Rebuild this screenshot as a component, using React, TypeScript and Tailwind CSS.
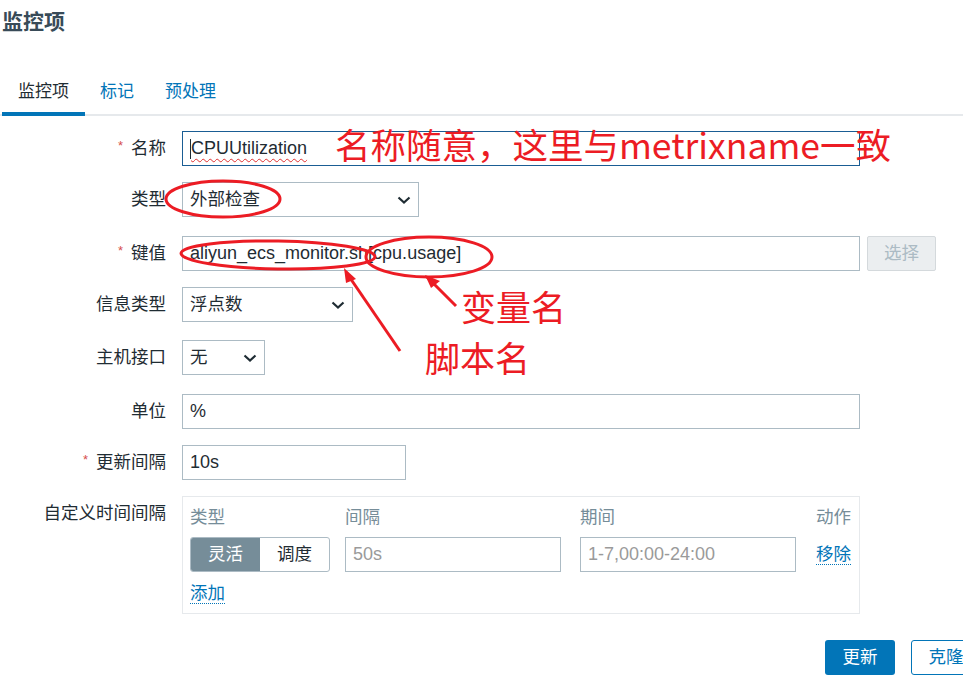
import React from "react";

const F = { fontFamily: '"Liberation Sans", "Noto Sans CJK SC", sans-serif' };

function Chevron() {
  return (
    <svg width="14" height="8" viewBox="0 0 14 8" className="shrink-0">
      <path d="M1.5 1.5 L7 6.5 L12.5 1.5" fill="none" stroke="#1f2c33" strokeWidth="2.2" />
    </svg>
  );
}

function Label({ text, req }: { text: string; req?: boolean }) {
  return (
    <div className="w-[166px] shrink-0 flex items-center justify-end h-[35px] text-[17.5px] text-[#1f2c33]">
      {req && <span className="text-[#d64e4e] text-[13px] mr-[8px] -mt-[6px]">*</span>}
      <span>{text}</span>
    </div>
  );
}

function Row({ mt, label, req, children, top }: { mt: string; label: string; req?: boolean; children: React.ReactNode; top?: boolean }) {
  return (
    <div className={`flex ${top ? "items-start" : "items-center"} ${mt}`}>
      <Label text={label} req={req} />
      <div className="ml-[16px]">{children}</div>
    </div>
  );
}

function Select({ w, text }: { w: string; text: string }) {
  return (
    <div className={`${w} h-[35px] border border-[#acbbc4] flex items-center justify-between pl-[7px] pr-[7px] text-[17.5px] text-[#1f2c33]`}>
      <span>{text}</span>
      <Chevron />
    </div>
  );
}

function Input({ w, text, cls }: { w: string; text: string; cls?: string }) {
  return (
    <div className={`${w} h-[35px] border border-[#acbbc4] flex items-center pl-[7px] text-[18px] ${cls ?? "text-[#1f2c33]"}`}>
      <span>{text}</span>
    </div>
  );
}

export default function App() {
  const red = "#ec1c24";
  return (
    <div className="relative w-[963px] h-[686px] overflow-hidden bg-white" style={F}>
      <div className="pt-[9px] pl-[2px] text-[21px] font-bold leading-[26px] text-[#384b58]">监控项</div>

      <div className="mt-[39px] flex border-b-2 border-[#e6e9ec] text-[17px] leading-[20px]">
        <div className="ml-[2px] px-[16px] pt-[8px] pb-[10px] border-b-4 border-[#0275b8] -mb-[2px] text-[#1f2c33]">监控项</div>
        <div className="px-[15px] pt-[8px] pb-[12px] text-[#0275b8]">标记</div>
        <div className="px-[16px] pt-[8px] pb-[12px] text-[#0275b8]">预处理</div>
      </div>

      <Row mt="mt-[15px]" label="名称" req>
        <div className="w-[678px] h-[35px] border border-[#1a5d94] flex items-center pl-[7px] text-[18px] text-[#1f2c33]">
          <span className="w-px h-[20px] bg-[#1f2c33]" />
          <span className="underline decoration-wavy decoration-[#e03030] decoration-1 underline-offset-[4px]">CPUUtilization</span>
        </div>
      </Row>

      <Row mt="mt-[16px]" label="类型">
        <Select w="w-[237px]" text="外部检查" />
      </Row>

      <Row mt="mt-[19px]" label="键值" req>
        <div className="flex items-center">
          <Input w="w-[678px]" text="aliyun_ecs_monitor.sh[cpu.usage]" />
          <div className="ml-[7px] w-[69px] h-[35px] rounded-[2px] border border-[#d4d9dc] bg-[#ebeef0] flex items-center justify-center text-[17.5px] text-[#acbbc4]">选择</div>
        </div>
      </Row>

      <Row mt="mt-[16px]" label="信息类型">
        <Select w="w-[171px]" text="浮点数" />
      </Row>

      <Row mt="mt-[18px]" label="主机接口">
        <Select w="w-[83px]" text="无" />
      </Row>

      <Row mt="mt-[19px]" label="单位">
        <Input w="w-[678px]" text="%" />
      </Row>

      <Row mt="mt-[16px]" label="更新间隔" req>
        <Input w="w-[224px]" text="10s" />
      </Row>

      <Row mt="mt-[16px]" label="自定义时间间隔" top>
        <div className="w-[678px] border border-[#e6e9ec] pl-[7px] pt-[8px] pb-[9px] text-[17.5px]">
          <div className="flex leading-[24px] text-[#768d99]">
            <div className="w-[155px]">类型</div>
            <div className="w-[235px]">间隔</div>
            <div className="w-[236px]">期间</div>
            <div>动作</div>
          </div>
          <div className="flex items-center mt-[8px]">
            <div className="flex w-[140px] h-[35px] border border-[#acbbc4] rounded-[3px] overflow-hidden">
              <div className="w-[70px] bg-[#768d99] text-white flex items-center justify-center">灵活</div>
              <div className="w-[70px] text-[#1f2c33] flex items-center justify-center">调度</div>
            </div>
            <div className="ml-[15px]">
              <Input w="w-[216px]" text="50s" cls="text-[#9a9a9a]" />
            </div>
            <div className="ml-[19px]">
              <Input w="w-[216px]" text="1-7,00:00-24:00" cls="text-[#9a9a9a]" />
            </div>
            <div className="ml-[20px] text-[#0275b8] border-b border-dotted border-[#0275b8] leading-[20px]">移除</div>
          </div>
          <div className="mt-[11px] flex">
            <span className="text-[#0275b8] border-b border-dotted border-[#0275b8] leading-[20px]">添加</span>
          </div>
        </div>
      </Row>

      <div className="mt-[26px] ml-[825px] flex gap-[16px] text-[17.5px]">
        <div className="w-[70px] h-[35px] shrink-0 rounded-[3px] bg-[#0275b8] text-white flex items-center justify-center">更新</div>
        <div className="w-[70px] h-[35px] shrink-0 rounded-[3px] border border-[#0275b8] text-[#0275b8] flex items-center justify-center">克隆</div>
      </div>

      {/* annotations */}
      <div
        className="absolute left-[335px] top-[122px] text-[35.5px] leading-[44px] whitespace-nowrap"
        style={{ color: red, fontFamily: '"Noto Sans CJK SC", "Noto Sans", sans-serif' }}
      >
        名称随意，这里与metrixname一致
      </div>
      <div
        className="absolute left-[461px] top-[285px] text-[35px] leading-[42px] whitespace-nowrap"
        style={{ color: red, fontFamily: '"Noto Sans CJK SC", sans-serif' }}
      >
        变量名
      </div>
      <div
        className="absolute left-[425px] top-[336px] text-[35px] leading-[42px] whitespace-nowrap"
        style={{ color: red, fontFamily: '"Noto Sans CJK SC", sans-serif' }}
      >
        脚本名
      </div>
      <svg className="absolute left-0 top-0 pointer-events-none" width="963" height="686">
        <g fill="none" stroke={red} strokeWidth="3">
          <ellipse cx="223" cy="199" rx="57" ry="18" />
          <ellipse cx="278" cy="255" rx="97" ry="14" transform="rotate(1 278 255)" />
          <ellipse cx="429" cy="257" rx="63" ry="20" />
          <line x1="456" y1="306" x2="427" y2="277" />
          <line x1="400" y1="351" x2="346" y2="272" />
        </g>
        <g fill={red}>
          <polygon points="425,275 440,281 431,288" />
          <polygon points="344,268 356,279 346,283" />
        </g>
      </svg>
    </div>
  );
}
